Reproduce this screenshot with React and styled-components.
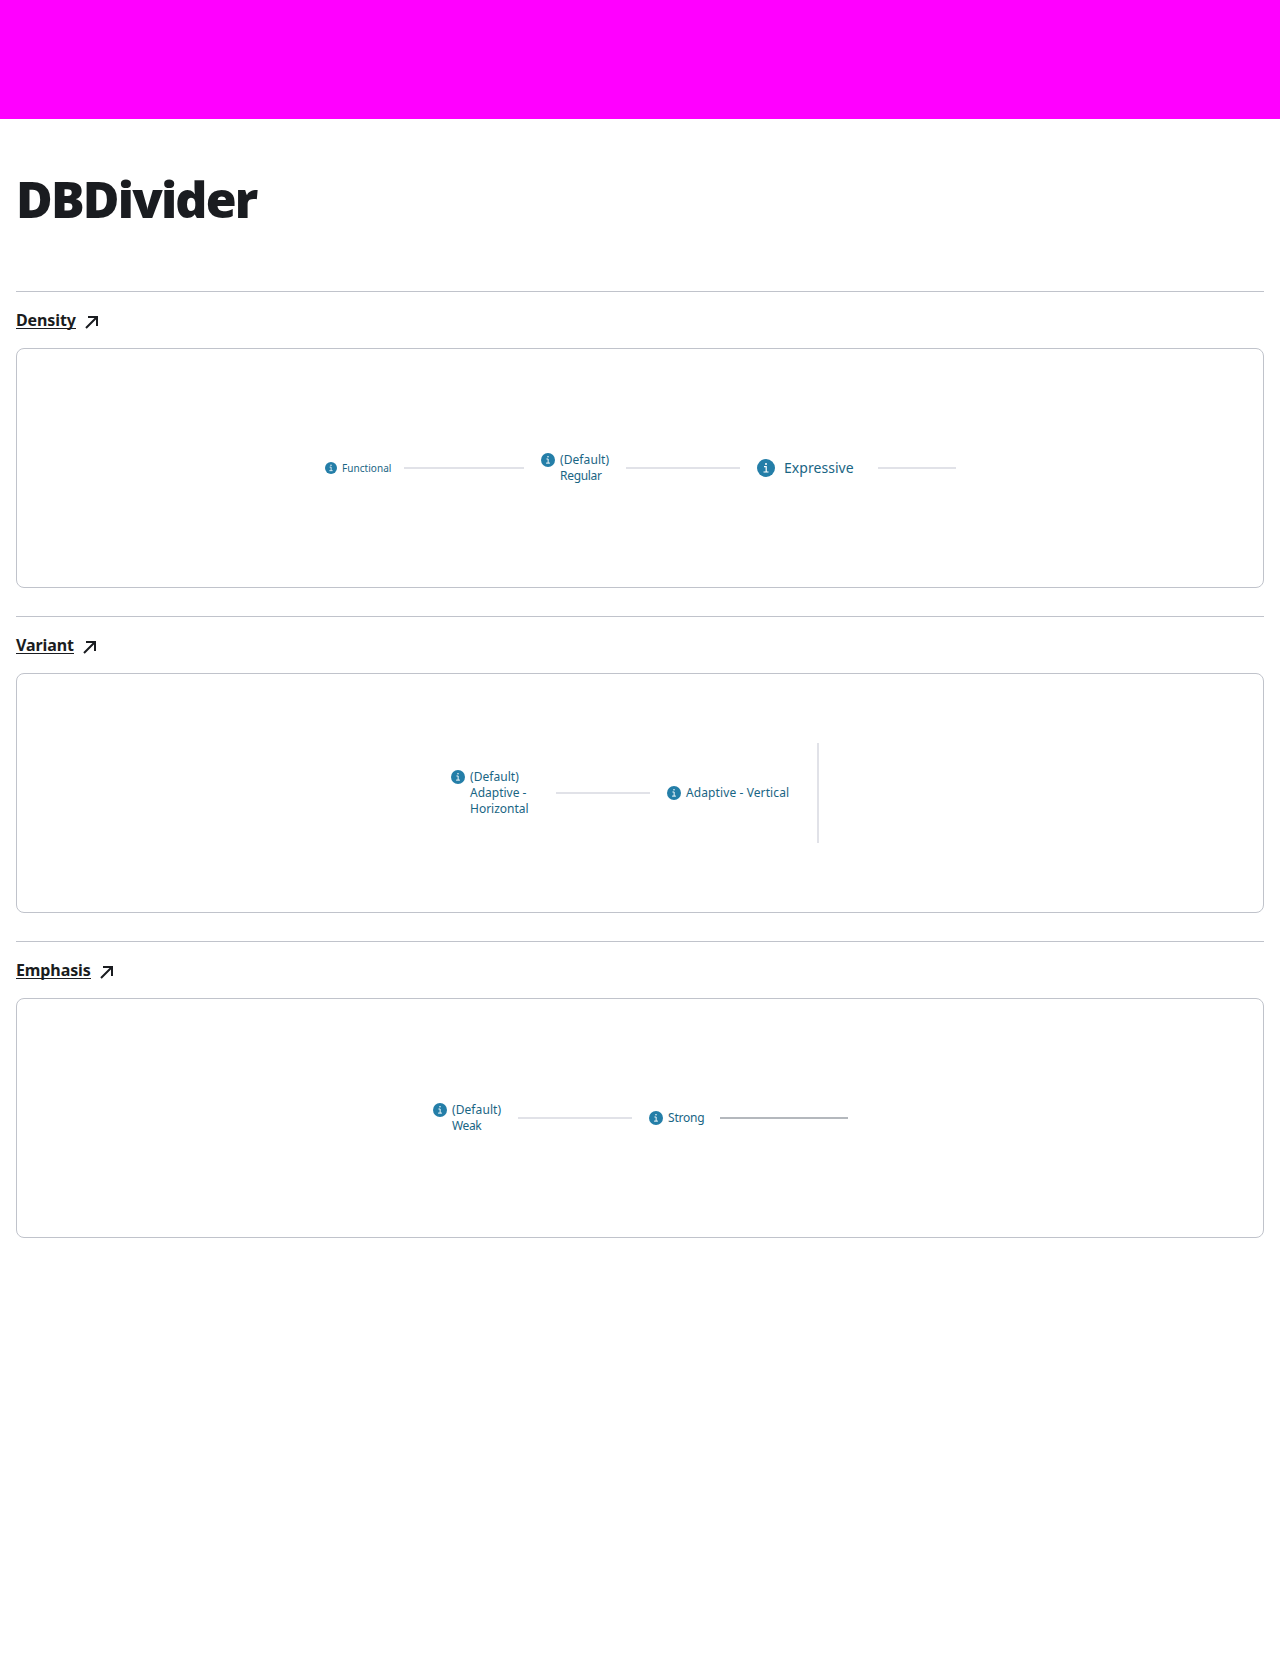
import React from "react";
import styled, { createGlobalStyle } from "styled-components";

const Global = createGlobalStyle`
  * { box-sizing: border-box; }
  body { margin: 0; background: #fff; color: #1a1c20; font-family: "Noto Sans", "Open Sans", sans-serif; }
`;
const Page = styled.div`
  min-height: 1655px;
`;
const Banner = styled.div`
  height: 119px;
  background: #ff00ff;
`;
const Main = styled.main`
  padding: 0 16px;
`;
const Title = styled.h1`
  margin: 0;
  height: 172px;
  padding-top: 45px;
  font: 800 50px/70px "Open Sans", "Noto Sans", sans-serif;
  letter-spacing: -1.8px;
`;
const Section = styled.section`
  height: 325px;
  border-top: 1px solid #c0c3cb;
`;
const Heading = styled.h2`
  margin: 0;
  height: 56px;
  padding-top: 16px;
  font-size: 16px;
  line-height: 24px;
`;
const Link = styled.a`
  display: flex;
  align-items: flex-start;
  gap: 9px;
  color: inherit;
  text-decoration: none;
`;
const LinkText = styled.span`
  height: 21px;
  border-bottom: 1px solid #1a1c20;
  letter-spacing: ${(p) => p.$spacing}px;
  white-space: nowrap;
`;
const Arrow = styled.svg`
  width: 13px;
  height: 13px;
  margin-top: 8px;
  fill: none;
  stroke: #1a1c20;
  stroke-width: 2;
`;
const Card = styled.div`
  height: 240px;
  border: 1px solid #c0c3cb;
  border-radius: 8px;
  display: flex;
  align-items: center;
  justify-content: center;
  gap: 16px;
`;
const Cell = styled.div`
  width: ${(p) => p.$width || 200}px;
  height: 100px;
  padding-left: 1px;
  display: flex;
  align-items: center;
`;
const Info = styled.div`
  width: ${(p) => p.$width}px;
  flex: none;
  display: flex;
  align-items: flex-start;
  gap: ${(p) => p.$gap}px;
  color: #196584;
  font-size: ${(p) => p.$font}px;
  line-height: 16px;
`;
const Icon = styled.svg`
  width: ${(p) => p.$size}px;
  height: ${(p) => p.$size}px;
  margin-top: ${(p) => (16 - p.$size) / 2}px;
  flex: none;
`;
const Lines = styled.div`
  display: flex;
  flex-direction: column;
  align-items: flex-start;
`;
const Line = styled.span`
  white-space: nowrap;
  letter-spacing: ${(p) => p.$spacing || 0}px;
`;
const Divider = styled.div`
  flex: ${(p) => (p.$vertical ? "none" : 1)};
  width: ${(p) => (p.$vertical ? "2px" : "auto")};
  height: ${(p) => (p.$vertical ? "100px" : "2px")};
  background: ${(p) => (p.$strong ? "#b4b8bd" : "#e1e2e8")};
`;

const sections = [
  { title: "Density", spacing: -0.1, items: [
    { lines: [["Functional", 0.05]], info: 79, size: 12, gap: 5, font: 10 },
    { lines: [["(Default)", 0.08], ["Regular", -0.3]], info: 85, size: 14, gap: 5, font: 12 },
    { lines: [["Expressive", 0.05]], info: 121, size: 18, gap: 9, font: 14 },
  ]},
  { title: "Variant", spacing: -0.1, items: [
    { lines: [["(Default)", 0.05], ["Adaptive -", 0], ["Horizontal", 0]], info: 105, size: 14, gap: 5, font: 12 },
    { lines: [["Adaptive - Vertical", 0.1]], info: 150, size: 14, gap: 5, font: 12, vertical: true, width: 164 },
  ]},
  { title: "Emphasis", spacing: -0.1, items: [
    { lines: [["(Default)", 0.08], ["Weak", -0.4]], info: 85, size: 14, gap: 5, font: 12 },
    { lines: [["Strong", -0.2]], info: 71, size: 14, gap: 5, font: 12, strong: true },
  ]},
];

function InfoIcon({ size }) {
  return (
    <Icon $size={size} viewBox="0 0 18 18">
      <circle cx="9" cy="9" r="9" fill="#247ea8" />
      <circle cx="9" cy="4.9" r="1" fill="#fff" />
      <path d="M7 7.7h2.2v5.3M6.5 13h5" fill="none" stroke="#fff" strokeWidth="1.2" />
    </Icon>
  );
}

function Example({ item }) {
  return (
    <Cell $width={item.width}>
      <Info $width={item.info} $gap={item.gap} $font={item.font}>
        <InfoIcon size={item.size} />
        <Lines>
          {item.lines.map(([text, spacing]) => (
            <Line key={text} $spacing={spacing}>{text}</Line>
          ))}
        </Lines>
      </Info>
      <Divider $vertical={item.vertical} $strong={item.strong} />
    </Cell>
  );
}

export default function App() {
  return (
    <Page>
      <Global />
      <Banner />
      <Main>
        <Title>DBDivider</Title>
        {sections.map((s) => (
          <Section key={s.title}>
            <Heading>
              <Link>
                <LinkText $spacing={s.spacing}>{s.title}</LinkText>
                <Arrow viewBox="0 0 13 13"><path d="M3 1h9v9M12 1 1 12" /></Arrow>
              </Link>
            </Heading>
            <Card>
              {s.items.map((item) => <Example key={item.lines[0][0]} item={item} />)}
            </Card>
          </Section>
        ))}
      </Main>
    </Page>
  );
}
